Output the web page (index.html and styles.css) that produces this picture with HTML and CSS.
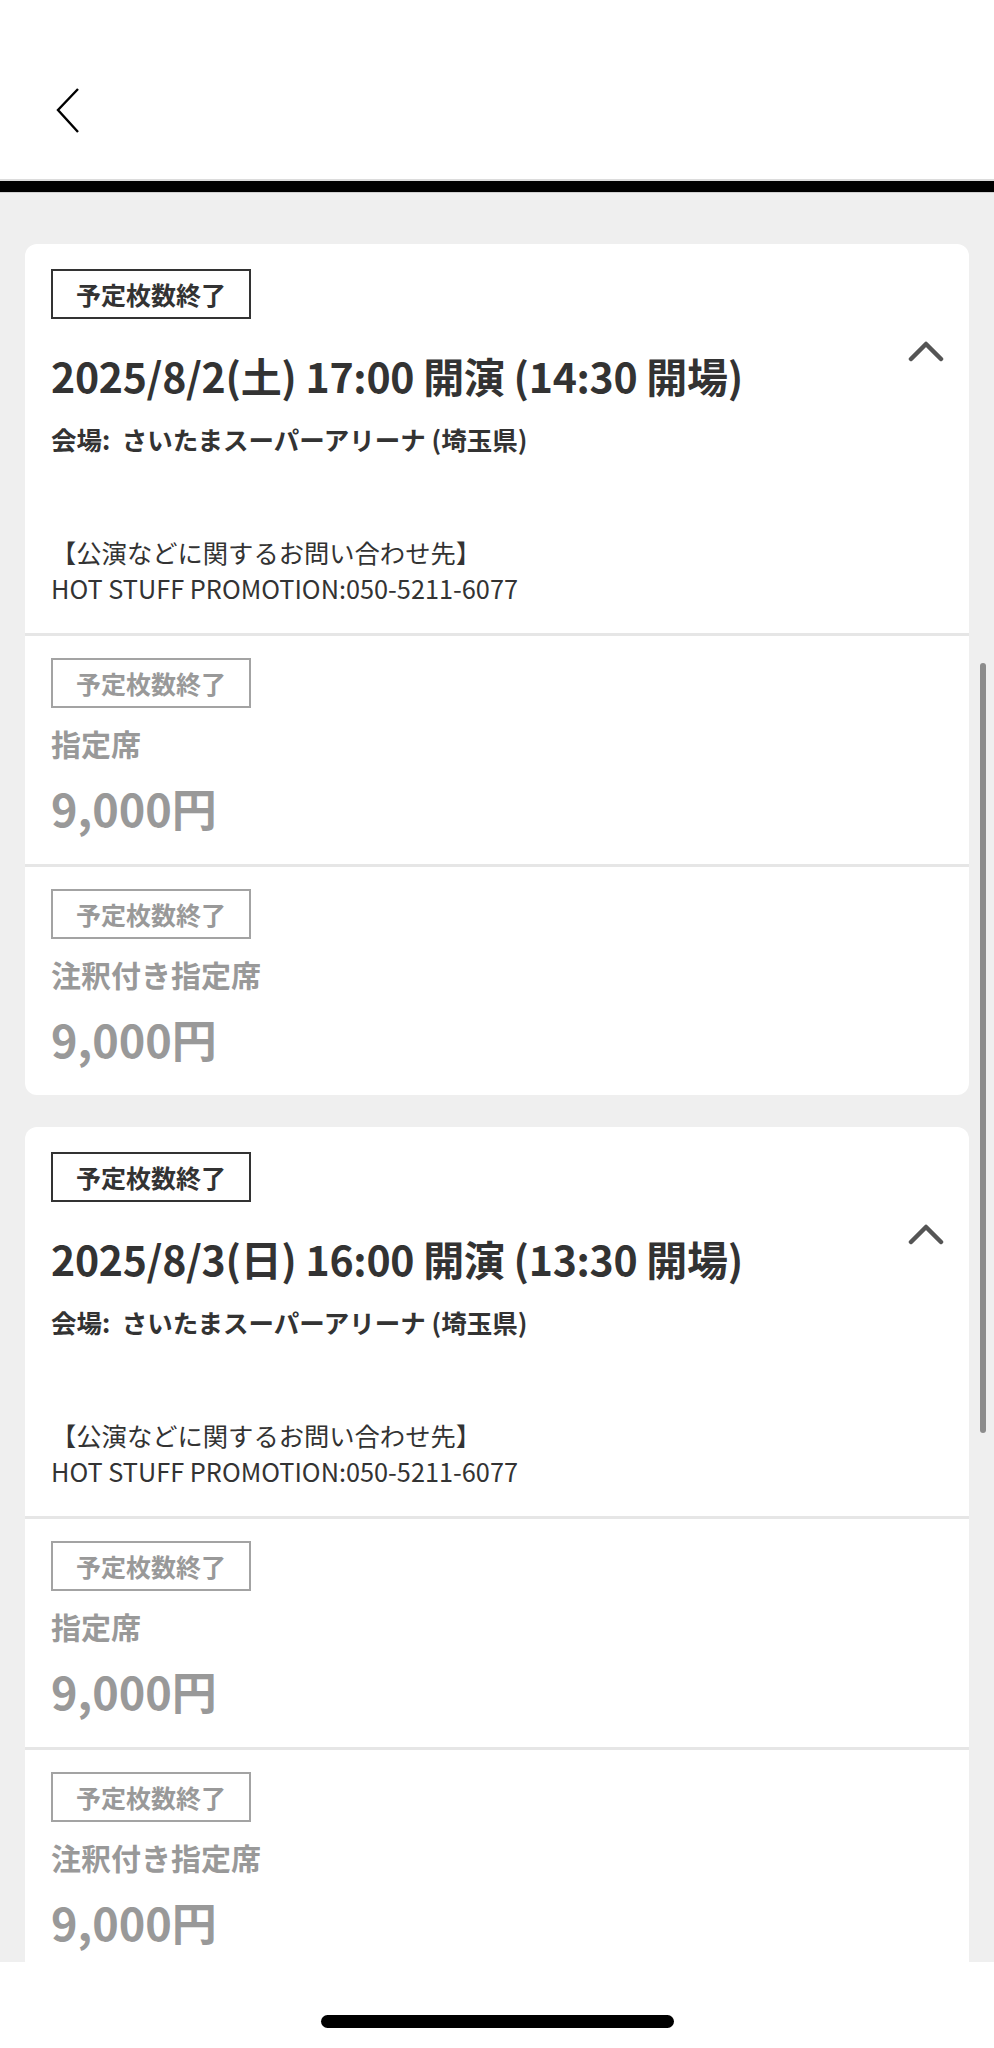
FILE: index.html
```html
<!DOCTYPE html>
<html lang="ja">
<head>
	<meta charset="UTF-8">
	<meta name="viewport" content="width=device-width, initial-scale=1.0">
	<title>公演一覧</title>
<link rel="stylesheet" href="styles.css">
</head>
<body>
	<header class="top-bar">
		<button type="button" class="back-button" aria-label="戻る">
			<svg width="26" height="46" viewBox="0 0 26 46"><path d="M23 2 L3 23 L23 45" fill="none" stroke="#000" stroke-width="2.4"/></svg>
		</button>
	</header>
	<div class="black-bar"></div>

	<main class="scroll-area">
		<div class="scroll-thumb"></div>

		<section class="card">
			<div class="card-head">
				<div class="head-text">
					<span class="badge">予定枚数終了</span>
					<h2 class="title">2025/8/2(土) 17:00 開演 (14:30 開場)</h2>
					<p class="venue">会場:&nbsp; さいたまスーパーアリーナ (埼玉県)</p>
					<p class="contact">【公演などに関するお問い合わせ先】<br>HOT STUFF PROMOTION:050-5211-6077</p>
				</div>
				<svg class="toggle" width="36" height="24" viewBox="0 0 36 24"><path d="M3 20 L18 5 L33 20" fill="none" stroke="#555" stroke-width="4.5" stroke-linecap="round" stroke-linejoin="round"/></svg>
			</div>
			<div class="seat">
				<span class="badge badge-off">予定枚数終了</span>
				<p class="seat-name">指定席</p>
				<p class="price">9,000円</p>
			</div>
			<div class="seat">
				<span class="badge badge-off">予定枚数終了</span>
				<p class="seat-name">注釈付き指定席</p>
				<p class="price">9,000円</p>
			</div>
		</section>

		<section class="card">
			<div class="card-head">
				<div class="head-text">
					<span class="badge">予定枚数終了</span>
					<h2 class="title">2025/8/3(日) 16:00 開演 (13:30 開場)</h2>
					<p class="venue">会場:&nbsp; さいたまスーパーアリーナ (埼玉県)</p>
					<p class="contact">【公演などに関するお問い合わせ先】<br>HOT STUFF PROMOTION:050-5211-6077</p>
				</div>
				<svg class="toggle" width="36" height="24" viewBox="0 0 36 24"><path d="M3 20 L18 5 L33 20" fill="none" stroke="#555" stroke-width="4.5" stroke-linecap="round" stroke-linejoin="round"/></svg>
			</div>
			<div class="seat">
				<span class="badge badge-off">予定枚数終了</span>
				<p class="seat-name">指定席</p>
				<p class="price">9,000円</p>
			</div>
			<div class="seat">
				<span class="badge badge-off">予定枚数終了</span>
				<p class="seat-name">注釈付き指定席</p>
				<p class="price">9,000円</p>
			</div>
		</section>
	</main>

	<footer class="home-bar">
		<div class="home-indicator"></div>
	</footer>
</body>
</html>
```

FILE: styles.css
```css
body {
	margin: 0;
	width: 994px;
	height: 2048px;
	overflow: hidden;
	display: flex;
	flex-direction: column;
	font-family: "Noto Sans CJK JP", "Noto Sans", sans-serif;
	color: #333;
	background: #fff;
}
p, h2 {
	margin: 0;
}
.top-bar {
	height: 181px;
	flex-shrink: 0;
	background: #fff;
	border-bottom: 2px solid #dcdcdc;
	box-sizing: border-box;
	padding: 87px 0 0 55px;
}
.back-button {
	border: none;
	background: none;
	padding: 0;
	display: block;
}
.black-bar {
	height: 12px;
	flex-shrink: 0;
	background: #000;
	border-bottom: 1px solid #d0d0d0;
	box-sizing: border-box;
}
.scroll-area {
	position: relative;
	flex: 1;
	overflow: hidden;
	background: #efefef;
	padding: 51px 25px 0 25px;
	display: flex;
	flex-direction: column;
	gap: 32px;
}
.scroll-thumb {
	position: absolute;
	left: 980px;
	top: 470px;
	width: 6px;
	height: 770px;
	border-radius: 3px;
	background: #8c8c8c;
}
.card {
	background: #fff;
	border-radius: 12px;
	flex-shrink: 0;
}
.card-head {
	display: flex;
	justify-content: space-between;
	padding: 25px 25px 27px 26px;
	border-bottom: 3px solid #e6e6e6;
}
.toggle {
	margin-top: 70px;
	flex-shrink: 0;
}
.badge {
	display: inline-block;
	border: 2px solid #333;
	padding: 0 23px;
	line-height: 46px;
	font-size: 25px;
	font-weight: 700;
	color: #333;
}
.badge-off {
	border-color: #a3a3a3;
	color: #999;
}
.title {
	margin-top: 27px;
	font-size: 41px;
	letter-spacing: -0.3px;
	line-height: 58px;
	font-weight: 700;
	color: #333;
}
.venue {
	margin-top: 18px;
	font-size: 25.5px;
	line-height: 34px;
	font-weight: 700;
}
.contact {
	margin-top: 78px;
	font-size: 25.3px;
	line-height: 36px;
	color: #333;
}
.seat {
	padding: 22px 26px 26px 26px;
	border-bottom: 3px solid #e6e6e6;
}
.seat:last-child {
	border-bottom: none;
	padding-bottom: 26px;
}
.seat-name {
	margin-top: 13px;
	font-size: 30px;
	line-height: 44px;
	font-weight: 700;
	color: #999;
}
.price {
	margin-top: 13px;
	font-size: 45px;
	line-height: 60px;
	font-weight: 700;
	color: #999;
}
.home-bar {
	height: 86px;
	flex-shrink: 0;
	background: #fff;
	display: flex;
	justify-content: center;
	padding-top: 53px;
	box-sizing: border-box;
}
.home-indicator {
	width: 353px;
	height: 13px;
	border-radius: 7px;
	background: #000;
}
```
